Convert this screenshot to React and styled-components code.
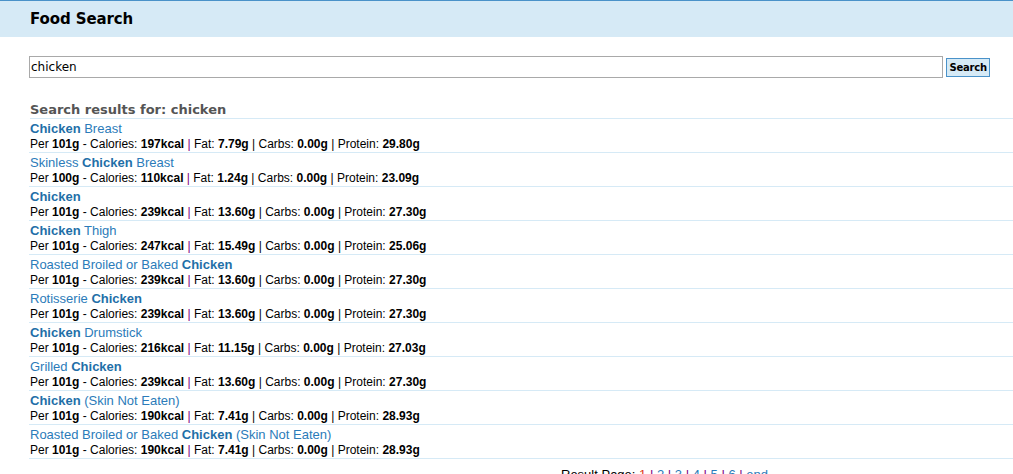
import React from "react";
import styled, { createGlobalStyle } from "styled-components";

const GlobalStyle = createGlobalStyle`
  body {
    margin: 0;
    background: #fff;
    font-family: "Liberation Sans", Arial, sans-serif;
  }
`;

const Header = styled.header`
  height: 36px;
  border-top: 1px solid #4a92c9;
  background: #d6eaf6;
  padding-left: 30px;
  display: flex;
  align-items: center;
`;

const Title = styled.h1`
  margin: 0;
  font-family: "DejaVu Sans", Verdana, sans-serif;
  font-size: 15px;
  font-weight: bold;
  color: #000;
  letter-spacing: -0.1px;
`;

const Main = styled.main`
  padding: 19px 0 0 29px;
`;

const SearchForm = styled.form`
  display: flex;
  align-items: center;
  gap: 3px;
  padding-right: 23px;
  margin: 0;
`;

const SearchInput = styled.input`
  flex: 1;
  height: 22px;
  box-sizing: border-box;
  border: 1px solid #a9a9a9;
  padding: 0 1px;
  font-family: "DejaVu Sans", Verdana, sans-serif;
  font-size: 12px;
  color: #000;
  outline: none;
`;

const SearchButton = styled.button`
  height: 19px;
  padding: 0 2px;
  box-sizing: border-box;
  border: 1px solid #4a92c9;
  background: #d6eaf6;
  font-family: "DejaVu Sans", Verdana, sans-serif;
  font-size: 10px;
  font-weight: bold;
  color: #000;
  letter-spacing: -0.2px;
`;

const ResultsHeading = styled.h2`
  margin: 24px 0 0 1px;
  font-family: "DejaVu Sans", Verdana, sans-serif;
  font-size: 13px;
  font-weight: bold;
  color: #555;
  line-height: 15px;
  padding-bottom: 1px;
  border-bottom: 1px solid #d6eaf6;
`;

const ResultList = styled.ul`
  list-style: none;
  margin: 0;
  padding: 0;
`;

const ResultItem = styled.li`
  padding: 2px 0 0 1px;
  height: 31px;
  border-bottom: 1px solid #d6eaf6;
`;

const FoodName = styled.a`
  display: block;
  font-size: 13px;
  line-height: 16px;
  color: #2b7bb9;
  text-decoration: none;
  b {
    color: #1f6fa8;
  }
`;

const Details = styled.div`
  font-size: 12px;
  line-height: 15px;
  color: #000;
`;

const Sep = styled.span`
  color: ${(p) => (p.$visited ? "#800080" : "#000")};
`;

const Pager = styled.div`
  padding: 8px 0 0 532px;
  font-size: 13px;
  color: #000;
`;

const PageLink = styled.a`
  color: ${(p) => (p.$current ? "#e03a1e" : "#2b7bb9")};
  text-decoration: underline;
`;

const results = [
  { pre: "", post: " Breast", per: 101, cal: 197, fat: "7.79", carbs: "0.00", protein: "29.80" },
  { pre: "Skinless ", post: " Breast", per: 100, cal: 110, fat: "1.24", carbs: "0.00", protein: "23.09" },
  { pre: "", post: "", per: 101, cal: 239, fat: "13.60", carbs: "0.00", protein: "27.30" },
  { pre: "", post: " Thigh", per: 101, cal: 247, fat: "15.49", carbs: "0.00", protein: "25.06" },
  { pre: "Roasted Broiled or Baked ", post: "", per: 101, cal: 239, fat: "13.60", carbs: "0.00", protein: "27.30" },
  { pre: "Rotisserie ", post: "", per: 101, cal: 239, fat: "13.60", carbs: "0.00", protein: "27.30" },
  { pre: "", post: " Drumstick", per: 101, cal: 216, fat: "11.15", carbs: "0.00", protein: "27.03" },
  { pre: "Grilled ", post: "", per: 101, cal: 239, fat: "13.60", carbs: "0.00", protein: "27.30" },
  { pre: "", post: " (Skin Not Eaten)", per: 101, cal: 190, fat: "7.41", carbs: "0.00", protein: "28.93" },
  { pre: "Roasted Broiled or Baked ", post: " (Skin Not Eaten)", per: 101, cal: 190, fat: "7.41", carbs: "0.00", protein: "28.93" },
];

export default function App() {
  return (
    <>
      <GlobalStyle />
      <Header>
        <Title>Food Search</Title>
      </Header>
      <Main>
        <SearchForm onSubmit={(e) => e.preventDefault()}>
          <SearchInput defaultValue="chicken" />
          <SearchButton type="submit">Search</SearchButton>
        </SearchForm>
        <ResultsHeading>Search results for: chicken</ResultsHeading>
        <ResultList>
          {results.map((r, i) => (
            <ResultItem key={i}>
              <FoodName href="#">
                {r.pre}
                <b>Chicken</b>
                {r.post}
              </FoodName>
              <Details>
                Per <b>{r.per}g</b> - Calories: <b>{r.cal}kcal</b> <Sep $visited>|</Sep> Fat:{" "}
                <b>{r.fat}g</b> <Sep>|</Sep> Carbs: <b>{r.carbs}g</b> <Sep>|</Sep> Protein:{" "}
                <b>{r.protein}g</b>
              </Details>
            </ResultItem>
          ))}
        </ResultList>
        <Pager>
          Result Page: <PageLink $current href="#">1</PageLink> <Sep $visited>|</Sep>{" "}
          <PageLink href="#">2</PageLink> <Sep $visited>|</Sep> <PageLink href="#">3</PageLink>{" "}
          <Sep $visited>|</Sep> <PageLink href="#">4</PageLink> <Sep $visited>|</Sep>{" "}
          <PageLink href="#">5</PageLink> <Sep $visited>|</Sep> <PageLink href="#">6</PageLink>{" "}
          <Sep $visited>|</Sep> <PageLink href="#">end</PageLink>
        </Pager>
      </Main>
    </>
  );
}
